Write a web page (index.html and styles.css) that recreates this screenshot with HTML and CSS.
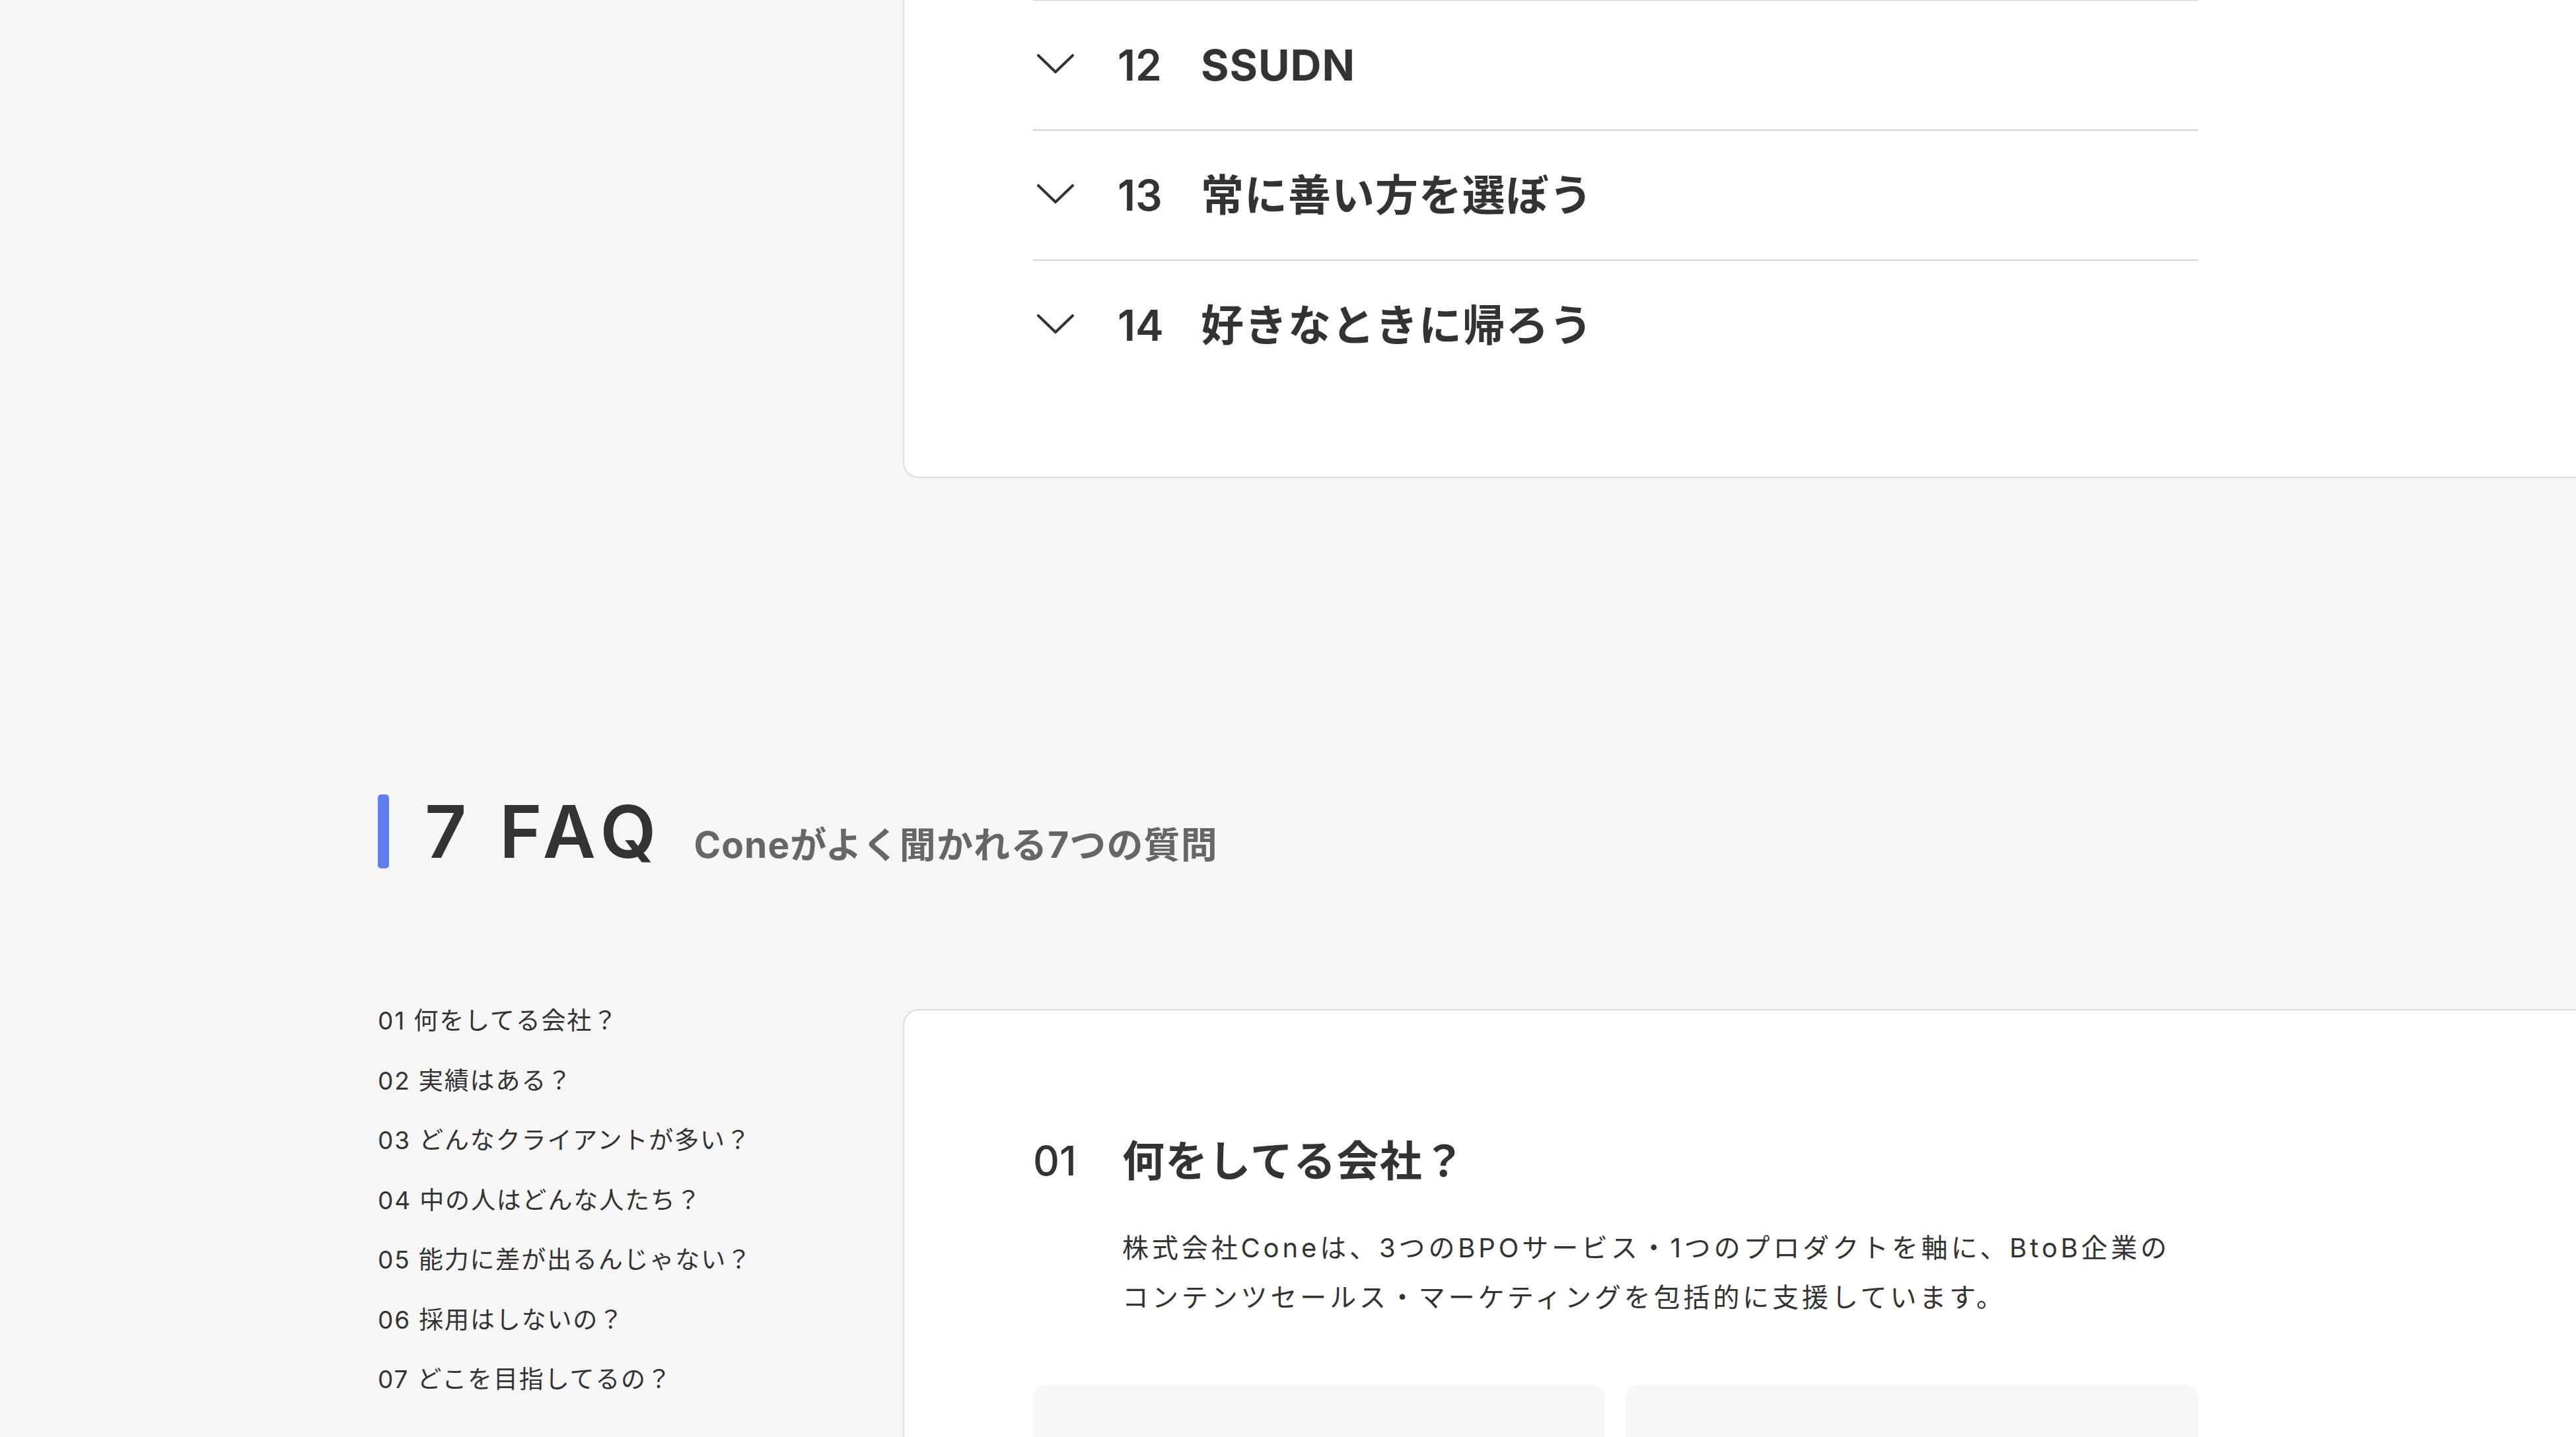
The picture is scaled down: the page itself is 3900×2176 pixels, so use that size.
FILE: index.html
```html
<!DOCTYPE html>
<html lang="ja">
<head>
<meta charset="utf-8">
<title>Cone - Values &amp; FAQ</title>
<link rel="stylesheet" href="styles.css">
</head>
<body>
<div class="page">
  <section class="values">
    <div class="side"></div>
    <div class="card card-values">
      <div class="inner">
        <div class="acc-row">
          <span class="chev"><svg width="56" height="30" viewBox="0 0 56 30"><polyline points="2,2 28,27 54,2" fill="none" stroke="#333" stroke-width="4" stroke-linecap="round" stroke-linejoin="round"/></svg></span>
          <span class="acc-num">12</span>
          <span class="acc-title">SSUDN</span>
        </div>
        <div class="acc-row">
          <span class="chev"><svg width="56" height="30" viewBox="0 0 56 30"><polyline points="2,2 28,27 54,2" fill="none" stroke="#333" stroke-width="4" stroke-linecap="round" stroke-linejoin="round"/></svg></span>
          <span class="acc-num">13</span>
          <span class="acc-title">常に善い方を選ぼう</span>
        </div>
        <div class="acc-row">
          <span class="chev"><svg width="56" height="30" viewBox="0 0 56 30"><polyline points="2,2 28,27 54,2" fill="none" stroke="#333" stroke-width="4" stroke-linecap="round" stroke-linejoin="round"/></svg></span>
          <span class="acc-num">14</span>
          <span class="acc-title">好きなときに帰ろう</span>
        </div>
      </div>
    </div>
  </section>

  <section class="faq">
    <header class="sec-head">
      <span class="bar"></span>
      <div class="sec-titles">
        <h2>7 FAQ</h2>
        <p>Coneがよく聞かれる7つの質問</p>
      </div>
    </header>

    <div class="faq-body">
      <nav class="faq-nav">
        <a>01 何をしてる会社？</a>
        <a>02 実績はある？</a>
        <a>03 どんなクライアントが多い？</a>
        <a>04 中の人はどんな人たち？</a>
        <a>05 能力に差が出るんじゃない？</a>
        <a>06 採用はしないの？</a>
        <a>07 どこを目指してるの？</a>
      </nav>
      <div class="card card-faq">
        <div class="inner">
          <h3 class="q"><span class="q-num">01</span><span class="q-title">何をしてる会社？</span></h3>
          <p class="answer">株式会社Coneは、3つのBPOサービス・1つのプロダクトを軸に、BtoB企業の<br>コンテンツセールス・マーケティングを包括的に支援しています。</p>
          <div class="boxes">
            <div class="box"></div>
            <div class="box"></div>
          </div>
        </div>
      </div>
    </div>
  </section>
</div>
</body>
</html>
```

FILE: styles.css
```css
html, body {
  margin: 0;
  padding: 0;
  width: 3900px;
  height: 2176px;
  overflow: hidden;
  background: #f6f6f6;
}

body {
  font-family: "Inter", "Noto Sans CJK JP", sans-serif;
  color: #333333;
}

.page {
  padding-left: 572px;
}

/* ---------- cards ---------- */
.card {
  background: #ffffff;
  border: 2px solid #dddddd;
  border-radius: 24px;
  width: 2900px;
  flex: none;
  box-sizing: border-box;
  padding-left: 195px;
}

.inner {
  width: 1764px;
}

/* ---------- values accordion ---------- */
.values {
  display: flex;
  margin-top: -101px;
}

.side {
  width: 795px;
  flex: none;
}

.card-values {
  padding-top: 98px;
  padding-bottom: 132px;
}

.acc-row {
  display: flex;
  align-items: center;
  height: 195px;
  border-top: 2px solid #d2d2d2;
  font-size: 65px;
  font-weight: 700;
  line-height: 1;
}

.chev {
  width: 128px;
  flex: none;
  display: flex;
  align-items: center;
  padding-left: 6px;
  box-sizing: border-box;
  margin-top: -4px;
}

.chev svg {
  display: block;
}

.acc-num {
  width: 126px;
  flex: none;
  font-weight: 600;
  font-size: 64px;
}

.acc-title {
  letter-spacing: 0.015em;
}

/* ---------- FAQ ---------- */
.faq {
  margin-top: 479px;
}

.sec-head {
  display: flex;
  align-items: center;
  height: 112px;
}

.bar {
  width: 17px;
  height: 112px;
  border-radius: 5px;
  background: #5f7ef0;
  flex: none;
}

.sec-titles {
  display: flex;
  align-items: baseline;
  margin-left: 54px;
}

.sec-titles h2 {
  margin: 0;
  font-size: 110px;
  font-weight: 600;
  line-height: 1;
  letter-spacing: 0.1em;
}

.sec-titles p {
  margin: 0 0 0 46px;
  font-size: 55px;
  font-weight: 700;
  color: #666666;
  line-height: 1;
  letter-spacing: 0.02em;
}

.faq-body {
  display: flex;
  align-items: flex-start;
  margin-top: 184px;
}

.faq-nav {
  width: 795px;
  flex: none;
  display: flex;
  flex-direction: column;
  padding-top: 2px;
}

.faq-nav a {
  display: block;
  font-size: 37px;
  line-height: 90.5px;
  letter-spacing: 0.05em;
  color: #333333;
}

.card-faq {
  margin-top: 29px;
  padding-top: 180px;
  height: 1200px;
}

.q {
  display: flex;
  align-items: center;
  margin: 0;
  height: 96px;
  font-size: 64px;
  font-weight: 700;
  line-height: 1;
}

.q-num {
  width: 135px;
  flex: none;
  font-weight: 500;
  font-size: 62px;
}

.q-title {
  letter-spacing: 0.02em;
}

.answer {
  margin: 46px 0 0 135px;
  font-size: 40px;
  line-height: 75px;
  letter-spacing: 0.122em;
  color: #333333;
}

.boxes {
  display: grid;
  grid-template-columns: 1fr 1fr;
  gap: 32px;
  margin-top: 95px;
}

.box {
  height: 400px;
  background: #f6f6f6;
  border-radius: 20px;
}
```
